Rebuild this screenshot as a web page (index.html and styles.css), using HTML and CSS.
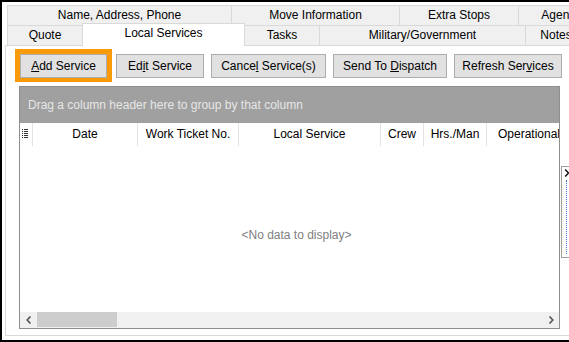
FILE: index.html
```html
<!DOCTYPE html>
<html>
<head>
<meta charset="utf-8">
<link rel="stylesheet" href="styles.css">
</head>
<body>
<div class="window">
  <div class="tabs">
    <div class="tabrow row1">
      <div class="tab t-name">Name, Address, Phone</div>
      <div class="tab t-move">Move Information</div>
      <div class="tab t-extra">Extra Stops</div>
      <div class="tab t-agent">Agents</div>
    </div>
    <div class="tabrow row2">
      <div class="tab t-quote">Quote</div>
      <div class="tab t-local active">Local Services</div>
      <div class="tab t-tasks">Tasks</div>
      <div class="tab t-mil">Military/Government</div>
      <div class="tab t-notes">Notes</div>
    </div>
  </div>
  <div class="panel">
    <div class="toolbar">
      <div class="focus-ring"><button class="btn b-add"><u>A</u>dd Service</button></div>
      <button class="btn b-edit">Ed<u>i</u>t Service</button>
      <button class="btn b-cancel">Cance<u>l</u> Service(s)</button>
      <button class="btn b-send">Send To <u>D</u>ispatch</button>
      <button class="btn b-refresh">Refresh Ser<u>v</u>ices</button>
    </div>
    <div class="grid">
      <div class="group-panel">Drag a column header here to group by that column</div>
      <div class="header">
        <div class="col c-ind">
          <svg width="6" height="9" viewBox="0 0 6 9"><path d="M0 0.5h1M2 0.5h4M0 2.5h1M2 2.5h4M0 4.5h1M2 4.5h4M0 6.5h1M2 6.5h4M0 8.5h1M2 8.5h4" stroke="#333" stroke-width="1"/></svg>
        </div>
        <div class="col c-date">Date</div>
        <div class="col c-ticket">Work Ticket No.</div>
        <div class="col c-local">Local Service</div>
        <div class="col c-crew">Crew</div>
        <div class="col c-hrs">Hrs./Man</div>
        <div class="col c-op">Operational Status</div>
      </div>
      <div class="body"><span class="empty">&lt;No data to display&gt;</span></div>
      <div class="hscroll">
        <div class="arrow">
          <svg width="6" height="8" viewBox="0 0 6 8"><path d="M4.5 0.5L1.2 4L4.5 7.5" fill="none" stroke="#555" stroke-width="1.6"/></svg>
        </div>
        <div class="thumb"></div>
        <div class="track"></div>
        <div class="arrow">
          <svg width="6" height="8" viewBox="0 0 6 8"><path d="M1.5 0.5L4.8 4L1.5 7.5" fill="none" stroke="#555" stroke-width="1.6"/></svg>
        </div>
      </div>
    </div>
  </div>
  <div class="vfrag">
    <svg width="6" height="8" viewBox="0 0 6 8"><path d="M1.2 0.5L4.5 4L1.2 7.5" fill="none" stroke="#111" stroke-width="1.5"/></svg>
    <div class="dots"></div>
  </div>
</div>
</body>
</html>
```

FILE: styles.css
```css
html, body {
  margin: 0;
  padding: 0;
  background: #ffffff;
}

body {
  font-family: "Liberation Sans", Arial, sans-serif;
  font-size: 12px;
  color: #000;
}

.window {
  position: relative;
  width: 569px;
  height: 342px;
  box-sizing: border-box;
  border-top: 2px solid #000;
  border-left: 2px solid #000;
  border-bottom: 2px solid #000;
  padding-top: 3px;
  padding-left: 3px;
  overflow: hidden;
  background: #fff;
}

.tabs {
  position: relative;
  z-index: 1;
  margin-left: 2px;
  width: 700px;
}

.tabrow {
  display: flex;
  height: 21px;
}

.row2 {
  margin-top: -1px;
  align-items: flex-end;
}

.tab {
  box-sizing: border-box;
  height: 21px;
  border: 1px solid #d9d9d9;
  background: #f0f0f0;
  margin-left: -1px;
  text-align: center;
  line-height: 19px;
  white-space: nowrap;
  flex: none;
}

.tab:first-child {
  margin-left: 0;
}

.tab.active {
  height: 23px;
  background: #fff;
  border-bottom: none;
  line-height: 19px;
  padding-bottom: 3px;
}

.t-name { width: 225px; }
.t-move { width: 169px; }
.t-extra { width: 120px; }
.t-agent { width: 84px; }

.t-quote { width: 76px; }
.t-local { width: 163px; }
.t-tasks { width: 76px; }
.t-mil { width: 207px; }
.t-notes { width: 62px; }

.panel {
  box-sizing: border-box;
  width: 620px;
  height: 291px;
  margin-top: -1px;
  border: 1px solid #d9d9d9;
  padding: 3px 0 0 9px;
}

.toolbar {
  display: flex;
  align-items: flex-start;
  gap: 7px;
}

.focus-ring {
  border: 5px solid #f99a0a;
  border-bottom-width: 4px;
  margin-right: -3px;
  display: flex;
}

.btn {
  box-sizing: border-box;
  height: 24px;
  padding: 0;
  margin: 0;
  border: 1px solid #adadad;
  background: #e1e1e1;
  font-family: "Liberation Sans", Arial, sans-serif;
  font-size: 12px;
  color: #000;
  text-align: center;
  white-space: nowrap;
}

.toolbar > .btn {
  margin-top: 5px;
}

.b-add { width: 87px; }
.b-edit { width: 88px; }
.b-cancel { width: 115px; }
.b-send { width: 114px; }
.b-refresh { width: 108px; }

.grid {
  box-sizing: border-box;
  width: 541px;
  height: 243px;
  margin: 4px 0 0 4px;
  border: 1px solid #8e8e8e;
  display: flex;
  flex-direction: column;
  background: #fff;
}

.group-panel {
  height: 36px;
  flex: none;
  background: #a0a0a0;
  color: #e6e6e6;
  line-height: 36px;
  padding-left: 8px;
  white-space: nowrap;
}

.header {
  display: flex;
  height: 23px;
  flex: none;
  overflow: hidden;
}

.col {
  box-sizing: border-box;
  flex: none;
  border-right: 1px solid #e3e3e3;
  text-align: center;
  line-height: 22px;
  white-space: nowrap;
  overflow: hidden;
}

.c-ind {
  width: 13px;
  display: flex;
  align-items: center;
  padding-left: 2px;
  padding-bottom: 2px;
}

.c-date { width: 105px; }
.c-ticket { width: 101px; }
.c-local { width: 142px; }
.c-crew { width: 43px; }
.c-hrs { width: 63px; }
.c-op {
  width: 140px;
  text-align: left;
  padding-left: 11px;
  border-right: none;
}

.body {
  flex: 1;
  display: flex;
  align-items: center;
  justify-content: center;
  padding-top: 11px;
  padding-left: 14px;
}

.empty {
  color: #808080;
  font-size: 12px;
}

.hscroll {
  height: 16px;
  flex: none;
  display: flex;
  background: #f0f0f0;
}

.arrow {
  width: 17px;
  display: flex;
  align-items: center;
  justify-content: center;
  flex: none;
}

.thumb {
  width: 80px;
  height: 15px;
  background: #cdcdcd;
  flex: none;
}

.track {
  flex: 1;
}

.vfrag {
  position: absolute;
  left: 559px;
  top: 164px;
  width: 10px;
  height: 92px;
  box-sizing: border-box;
  border: 1px solid #a0a0a0;
  border-right: none;
  background: #fff;
  display: flex;
  flex-direction: column;
  align-items: center;
  padding-top: 2px;
}

.dots {
  margin-top: 3px;
  width: 0;
  flex: 1;
  border-left: 1px dotted #3a7bd5;
  margin-bottom: 3px;
}
```
